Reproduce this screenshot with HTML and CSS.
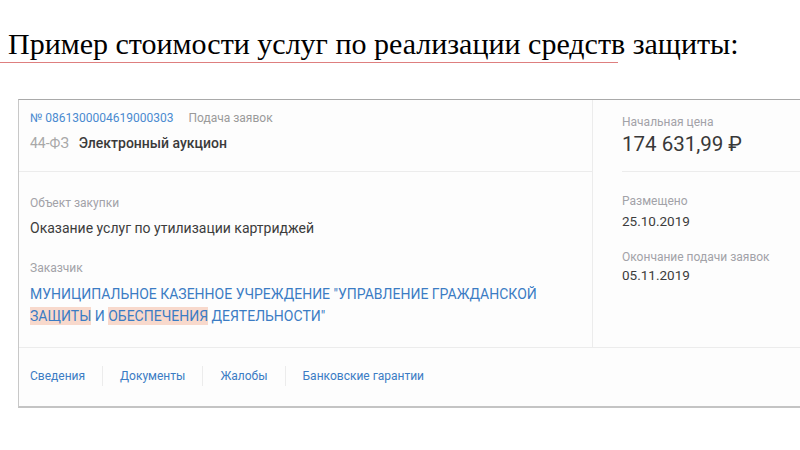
FILE: index.html
```html
<!DOCTYPE html>
<html lang="ru">
<head>
<meta charset="utf-8">
<link rel="stylesheet" href="styles.css">
</head>
<body>
<div class="slide">
  <div class="title-wrap">
    <h1 class="title">Пример стоимости услуг по реализации средств защиты:</h1>
  </div>
  <div class="card">
    <div class="main">
      <div class="left">
        <div class="head">
          <div class="row1"><span class="num">№ 0861300004619000303</span><span class="stage">Подача заявок</span></div>
          <div class="row2"><span class="law">44-ФЗ</span><span class="type">Электронный аукцион</span></div>
        </div>
        <div class="body">
          <div class="label">Объект закупки</div>
          <div class="value">Оказание услуг по утилизации картриджей</div>
          <div class="label label-customer">Заказчик</div>
          <div class="customer">МУНИЦИПАЛЬНОЕ КАЗЕННОЕ УЧРЕЖДЕНИЕ "УПРАВЛЕНИЕ ГРАЖДАНСКОЙ <mark class="hl">ЗАЩИТЫ</mark> И <mark class="hl">ОБЕСПЕЧЕНИЯ</mark> ДЕЯТЕЛЬНОСТИ"</div>
        </div>
      </div>
      <div class="right">
        <div class="price-block">
          <div class="label">Начальная цена</div>
          <div class="price">174 631,99 ₽</div>
        </div>
        <div class="dates">
          <div class="label">Размещено</div>
          <div class="date">25.10.2019</div>
          <div class="label label-end">Окончание подачи заявок</div>
          <div class="date">05.11.2019</div>
        </div>
      </div>
    </div>
    <div class="tabs">
      <a class="tab">Сведения</a>
      <a class="tab">Документы</a>
      <a class="tab">Жалобы</a>
      <a class="tab">Банковские гарантии</a>
    </div>
  </div>
</div>
</body>
</html>
```
FILE: styles.css
```css
* { box-sizing: border-box; }
html, body { margin: 0; padding: 0; background: #ffffff; }
.slide { width: 800px; height: 450px; overflow: hidden; }
.title-wrap { padding-top: 27px; width: 618px; border-bottom: 1px solid #de7f7f; }
.title {
  margin: 0 0 0 8px;
  font-family: "Liberation Serif", "Times New Roman", serif;
  font-weight: normal;
  font-size: 30px;
  line-height: 34px;
  color: #000;
  white-space: nowrap;
  padding-bottom: 1px;
}
.card {
  margin: 36px 0 0 18px;
  width: 790px;
  border-top: 1px solid #a9a9a9;
  border-left: 1px solid #c8c8c8;
  border-bottom: 2px solid #c4c4c4;
  font-family: Roboto, "Noto Sans", sans-serif;
  background: #fdfdfd;
}
.main { display: flex; border-bottom: 1px solid #ececec; }
.left { width: 574px; border-right: 1px solid #ececec; }
.head { height: 72px; padding: 11px 0 0 11px; border-bottom: 1px solid #ececec; }
.row1 { font-size: 12px; line-height: 14px; display: flex; gap: 15px; }
.num { color: #4a8ad0; }
.stage { color: #9a9a9a; }
.row2 { margin-top: 10px; font-size: 14px; line-height: 17px; display: flex; gap: 10px; }
.law { color: #a8a8a8; }
.type { color: #3a3a3a; font-weight: 500; }
.body { padding: 24px 0 0 11px; height: 175px; }
.label { font-size: 12px; line-height: 14px; color: #a2a2a8; }
.value { margin-top: 10px; font-size: 14px; line-height: 17px; color: #3c3c3c; }
.label-customer { margin-top: 24px; }
.customer {
  margin-top: 8px;
  font-size: 14px;
  line-height: 22px;
  color: #3b7cc4;
  width: 530px;
}
.hl { background: #f8d9cc; color: #3b7cc4; padding: 1px 0; }
.right { flex: 1; padding-left: 29px; }
.price-block { height: 72px; padding-top: 15px; border-bottom: 1px solid #ececec; }
.price { margin-top: 3px; font-size: 20.5px; line-height: 25px; color: #383838; }
.dates { padding-top: 22px; }
.date { margin-top: 5px; font-size: 13.5px; line-height: 17px; color: #3c3c3c; }
.label-end { margin-top: 20px; }
.date:last-child { margin-top: 3px; }
.tabs { height: 58px; display: flex; align-items: center; padding: 0 0 3px 11px; }
.tab {
  font-size: 12px;
  color: #3b7cc4;
  padding: 0 17px 0 17px;
  border-left: 1px solid #ececec;
  line-height: 20px;
}
.tab:first-child { padding-left: 0; border-left: 0; }
```
